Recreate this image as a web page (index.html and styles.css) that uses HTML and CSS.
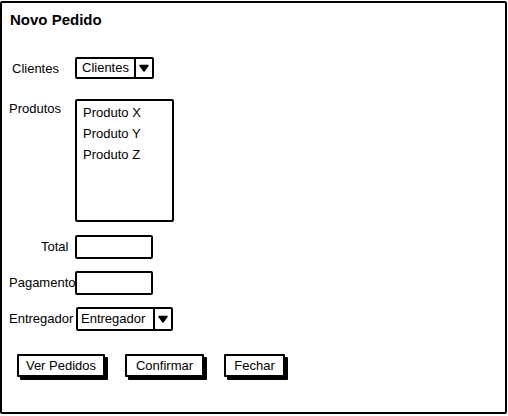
FILE: index.html
```html
<!DOCTYPE html>
<html>
<head>
<meta charset="utf-8">
<link rel="stylesheet" href="styles.css">
</head>
<body>
<div class="frame">
  <h1 class="title">Novo Pedido</h1>

  <div class="row row-clientes">
    <span class="label label-clientes">Clientes</span>
    <div class="select select-clientes">
      <span class="select-text">Clientes</span>
      <span class="select-arrow"><svg width="10" height="8" viewBox="0 0 10 8"><path d="M1 1.5 L9 1.5 L5 7 Z" fill="#000" stroke="#000" stroke-width="1.5" stroke-linejoin="round"/></svg></span>
    </div>
  </div>

  <div class="row row-produtos">
    <span class="label label-produtos">Produtos</span>
    <div class="list">
      <div class="list-item">Produto X</div>
      <div class="list-item">Produto Y</div>
      <div class="list-item">Produto Z</div>
    </div>
  </div>

  <div class="row row-total">
    <span class="label label-total">Total</span>
    <div class="input"></div>
  </div>

  <div class="row row-pag">
    <span class="label">Pagamento</span>
    <div class="input"></div>
  </div>

  <div class="row row-entregador">
    <span class="label">Entregador</span>
    <div class="select select-entregador">
      <span class="select-text">Entregador</span>
      <span class="select-arrow"><svg width="10" height="8" viewBox="0 0 10 8"><path d="M1 1.5 L9 1.5 L5 7 Z" fill="#000" stroke="#000" stroke-width="1.5" stroke-linejoin="round"/></svg></span>
    </div>
  </div>

  <div class="buttons">
    <div class="btn btn-ver">Ver Pedidos</div>
    <div class="btn btn-conf">Confirmar</div>
    <div class="btn btn-fechar">Fechar</div>
  </div>
</div>
</body>
</html>
```

FILE: styles.css
```css
* { box-sizing: border-box; }
html, body { margin: 0; padding: 0; background: #fff; }
body {
  font-family: "Liberation Sans", Arial, sans-serif;
  font-size: 13px;
  color: #000;
}
.frame {
  margin-top: 1px;
  width: 507px;
  height: 413px;
  border: 2px solid #000;
  border-radius: 2px;
  display: flex;
  flex-direction: column;
  padding-left: 7px;
}
.title {
  margin: 8px 0 0 1px;
  font-size: 15px;
  line-height: 18px;
  font-weight: bold;
}
.row {
  display: flex;
  align-items: center;
}
.label {
  width: 66px;
  line-height: 16px;
  flex: none;
  white-space: nowrap;
}
.label-clientes { padding-left: 3px; padding-top: 2px; }
.label-total { padding-left: 32px; }
.row-clientes { margin-top: 28px; height: 22px; }
.row-produtos { margin-top: 20px; align-items: flex-start; }
.label-produtos { padding-top: 2px; }
.row-total { margin-top: 13px; }
.row-pag { margin-top: 12px; }
.row-entregador { margin-top: 12px; }

.select {
  display: flex;
  border: 2px solid #000;
  border-radius: 2px;
  height: 22px;
  background: #fff;
}
.select-clientes { width: 79px; }
.select-entregador { width: 97px; height: 24px; margin-left: 1px; }
.select-text {
  flex: 1;
  padding-left: 5px;
  line-height: 17px;
  border-right: 2px solid #000;
}
.select-entregador .select-text { line-height: 19px; padding-left: 3px; }
.select-arrow {
  width: 16px;
  display: flex;
  align-items: center;
  justify-content: center;
}

.list {
  width: 99px;
  height: 123px;
  border: 2px solid #000;
  border-radius: 2px;
  padding: 1px 0 0 6px;
}
.list-item { line-height: 21px; }

.input {
  width: 78px;
  height: 24px;
  border: 2px solid #000;
  border-radius: 2px;
}

.buttons {
  display: flex;
  gap: 20px;
  margin-top: 23px;
  padding-left: 8px;
}
.btn {
  height: 23px;
  border: 2px solid #000;
  border-radius: 1px;
  box-shadow: 3px 3px 0 #000;
  text-align: center;
  line-height: 19px;
  background: #fff;
}
.btn-ver { width: 88px; }
.btn-conf { width: 79px; }
.btn-fechar { width: 61px; }
```
